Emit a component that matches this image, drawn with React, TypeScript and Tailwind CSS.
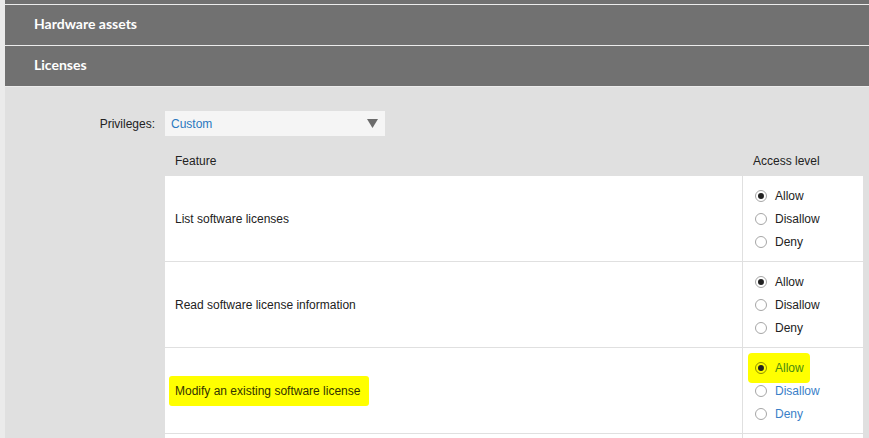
import React from "react"

type Level = "Allow" | "Disallow" | "Deny"

interface FeatureRow {
  name: string
  level: Level
  marked?: boolean
}

const rows: FeatureRow[] = [
  { name: "List software licenses", level: "Allow" },
  { name: "Read software license information", level: "Allow" },
  { name: "Modify an existing software license", level: "Allow", marked: true },
]

const levels: Level[] = ["Allow", "Disallow", "Deny"]

function Radio({ checked, marked }: { checked: boolean; marked?: boolean }) {
  return (
    <span
      className={
        "flex h-[12px] w-[12px] shrink-0 items-center justify-center rounded-full border " +
        (marked ? "border-[#8f8f00] bg-[#ffff00]" : "border-[#a6a6a6] bg-white")
      }
    >
      {checked && <span className="h-[6px] w-[6px] rounded-full bg-[#222]" />}
    </span>
  )
}

export default function App() {
  return (
    <div className="flex h-[438px] w-[869px] overflow-hidden bg-[#ebebeb] font-['Liberation_Sans',Arial,sans-serif]">
      <div className="ml-[5px] flex-1 bg-[#e0e0e0]">
        <div className="h-[5px] border-b border-[#ececec] bg-[#717171]" />
        <div className="flex h-[41px] items-center border-b border-[#ececec] bg-[#717171] pb-[3px] pl-[29px] font-['Lato',sans-serif] text-[14px] font-bold text-white">
          Hardware assets
        </div>
        <div className="flex h-[41px] items-center border-b border-[#ececec] bg-[#717171] pb-[3px] pl-[29px] font-['Lato',sans-serif] text-[14px] font-bold text-white">
          Licenses
        </div>

        <div className="mr-[6px] pt-[24px]">
          <div className="flex items-center">
            <div className="w-[160px] pr-[10px] text-right text-[12px] text-[#222]">Privileges:</div>
            <div className="flex h-[25px] w-[220px] items-center justify-between bg-[#f5f5f5] pl-[6px] pr-[7px]">
              <span className="text-[12px] text-[#2a78c0]">Custom</span>
              <svg width="11" height="9" viewBox="0 0 11 9">
                <path d="M0 0 L11 0 L5.5 9 Z" fill="#6b6b6b" />
              </svg>
            </div>
          </div>

          <div className="ml-[160px] mt-[9px]">
            <div className="flex h-[31px] items-center text-[12px] text-[#222]">
              <div className="flex-1 pl-[10px]">Feature</div>
              <div className="w-[121px] pl-[11px]">Access level</div>
            </div>

            {rows.map((row, i) => (
              <div key={i} className="flex h-[86px] border-b border-[#e0e0e0] bg-white text-[12px]">
                <div className="flex flex-1 items-center pl-[10px]">
                  {row.marked ? (
                    <span className="-ml-[6px] rounded-[3px] bg-[#ffff00] py-[6px] pl-[6px] pr-[9px] text-[#333300]">
                      {row.name}
                    </span>
                  ) : (
                    <span className="text-[#222]">{row.name}</span>
                  )}
                </div>
                <div className="w-[121px] border-l border-[#e0e0e0] py-[8px] pl-[12px]">
                  {levels.map((lv) => {
                    const checked = lv === row.level
                    const hi = row.marked && checked
                    let color = "text-[#222]"
                    if (row.marked) color = checked ? "text-[#4a8a10]" : "text-[#3a80c8]"
                    return (
                      <div key={lv} className="relative flex h-[23px] items-center gap-[8px]">
                        {hi && (
                          <span className="absolute -left-[7px] top-[-3px] h-[30px] w-[62px] rounded-[4px] bg-[#ffff00]" />
                        )}
                        <span className="relative flex items-center gap-[8px]">
                          <Radio checked={checked} marked={hi} />
                          <span className={color}>{lv}</span>
                        </span>
                      </div>
                    )
                  })}
                </div>
              </div>
            ))}
            <div className="flex h-[86px] bg-white">
              <div className="flex-1" />
              <div className="w-[121px] border-l border-[#e0e0e0]" />
            </div>
          </div>
        </div>
      </div>
    </div>
  )
}
